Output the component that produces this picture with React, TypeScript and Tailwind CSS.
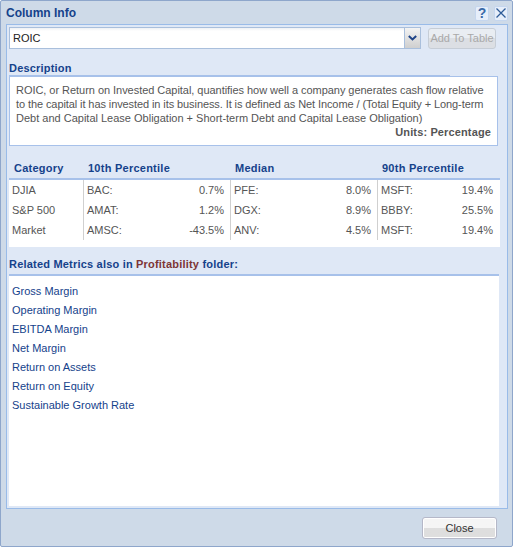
const rows = [
  { name: "DJIA", cells: [["BAC:", "0.7%"], ["PFE:", "8.0%"], ["MSFT:", "19.4%"]] },
  { name: "S&P 500", cells: [["AMAT:", "1.2%"], ["DGX:", "8.9%"], ["BBBY:", "25.5%"]] },
  { name: "Market", cells: [["AMSC:", "-43.5%"], ["ANV:", "4.5%"], ["MSFT:", "19.4%"]] },
];

const metrics = [
  "Gross Margin",
  "Operating Margin",
  "EBITDA Margin",
  "Net Margin",
  "Return on Assets",
  "Return on Equity",
  "Sustainable Growth Rate",
];

function ToolButton({ children }: { children: React.ReactNode }) {
  return (
    <div className="flex h-[15px] w-[14px] items-center justify-center rounded-[2px] border border-[#c5d6ee] bg-[#e6eefa]">
      {children}
    </div>
  );
}

export default function App() {
  return (
    <div className="h-[548px] w-[514px] bg-white font-['Liberation_Sans',Arial,sans-serif] text-[11px] text-[#555555]">
      <div className="flex h-[547px] w-[513px] flex-col rounded-[2px] border border-[#8ea6cb] bg-[#cedae8] pl-[5px] pr-[4px]">
        {/* title bar */}
        <div className="flex h-[23px] shrink-0 items-center justify-between">
          <span className="text-[12px] font-bold text-[#15428b]">Column Info</span>
          <div className="flex gap-[5px] pt-[1px]">
            <ToolButton>
              <span className="text-[14px] leading-none font-bold text-[#3a6aa8]">?</span>
            </ToolButton>
            <ToolButton>
              <svg width="12" height="12" viewBox="0 0 12 12" fill="none" stroke="#2f5c98" strokeWidth="1.3">
                <path d="M1.5 1.5l9 9M10.5 1.5l-9 9" />
              </svg>
            </ToolButton>
          </div>
        </div>

        {/* body */}
        <div className="flex h-[485px] w-[502px] shrink-0 flex-col border border-[#99bbe8] bg-[#dfe8f6] pl-[2px]">
          <div className="flex pt-[2px]">
            <div className="flex h-[22px] w-[412px]">
              <div className="flex flex-1 items-center border border-[#a9bfdc] border-r-0 bg-white bg-gradient-to-b from-[#eef0f3] from-0% to-white to-15% pl-[3px] text-[11px] text-[#222222]">
                ROIC
              </div>
              <div className="flex w-[17px] items-center justify-center border border-[#a9bfdc] bg-gradient-to-b from-[#f3f3f3] to-[#cfcfcf]">
                <svg width="9" height="6" viewBox="0 0 9 6" fill="none" stroke="#1f4488" strokeWidth="2">
                  <path d="M0.8 1l3.7 3.4L8.2 1" />
                </svg>
              </div>
            </div>
            <div className="ml-[7px] mt-[1px] flex h-[21px] w-[68px] items-center justify-center rounded-[3px] border border-[#c6cdd6] bg-gradient-to-b from-[#e9edf2] from-50% to-[#dcdfe4] to-50% text-[11px] text-[#a9a9a9]">
              Add To Table
            </div>
          </div>

          <div className="mt-[12px] h-[14px] leading-[14px] font-bold tracking-[0.2px] text-[#15428b]">
            Description
          </div>
          <div className="h-[2px] w-[441px] bg-[#a7c1ea]" />
          <div className="-mt-[1px] h-[70px] w-[489px] border border-[#a7c1ea] bg-white px-[6px] pt-[6px] leading-[14px] text-[#555555]">
            <p className="whitespace-nowrap tracking-[-0.04px]">ROIC, or Return on Invested Capital, quantifies how well a company generates cash flow relative</p>
            <p className="whitespace-nowrap tracking-[-0.09px]">to the capital it has invested in its business. It is defined as Net Income / (Total Equity + Long-term</p>
            <p className="whitespace-nowrap">Debt and Capital Lease Obligation + Short-term Debt and Capital Lease Obligation)</p>
            <p className="text-right font-bold tracking-[0.13px]">Units: Percentage</p>
          </div>

          {/* percentile table */}
          <div className="mt-[12px] grid h-[20px] w-[491px] grid-cols-[79px_147px_147px_118px] items-center font-bold tracking-[0.25px] text-[#15428b]">
            <span className="pl-[5px]">Category</span>
            <span>10th Percentile</span>
            <span>Median</span>
            <span>90th Percentile</span>
          </div>
          <div className="h-[2px] w-[491px] bg-[#a7c1ea]" />
          <div className="h-[67px] w-[491px] bg-white">
            {rows.map((row) => (
              <div key={row.name} className="grid h-[20px] grid-cols-[74px_147px_147px_122px] items-center">
                <span className="h-full pl-[3px] leading-[20px]">{row.name}</span>
                {row.cells.map(([ticker, value], i) => (
                  <div
                    key={i}
                    className="flex h-full items-center justify-between border-l border-[#d0d0d0] pl-[3px] pr-[6px]"
                  >
                    <span>{ticker}</span>
                    <span>{value}</span>
                  </div>
                ))}
              </div>
            ))}
          </div>

          {/* related metrics */}
          <div className="mt-[10px] h-[14px] leading-[14px] font-bold tracking-[0.2px] text-[#15428b]">
            Related Metrics also in <span className="text-[#7d3535]">Profitability</span> folder:
          </div>
          <div className="mt-[3px] h-[2px] w-[490px] bg-[#a7c1ea]" />
          <div className="flex h-[230px] w-[490px] flex-col bg-white pl-[3px] pt-[6px]">
            {metrics.map((metric) => (
              <span key={metric} className="h-[19px] leading-[19px] text-[#15428b]">
                {metric}
              </span>
            ))}
          </div>
        </div>

        {/* footer */}
        <div className="flex flex-1 items-start justify-end pr-[11px] pt-[8px]">
          <div className="flex h-[22px] w-[75px] items-center justify-center rounded-[3px] border border-[#b5b8c8] bg-gradient-to-b from-[#f5f5f5] from-50% to-[#dedede] to-50% text-[#333333] shadow-[inset_0_0_0_1px_#ffffff]">
            Close
          </div>
        </div>
      </div>
    </div>
  );
}
